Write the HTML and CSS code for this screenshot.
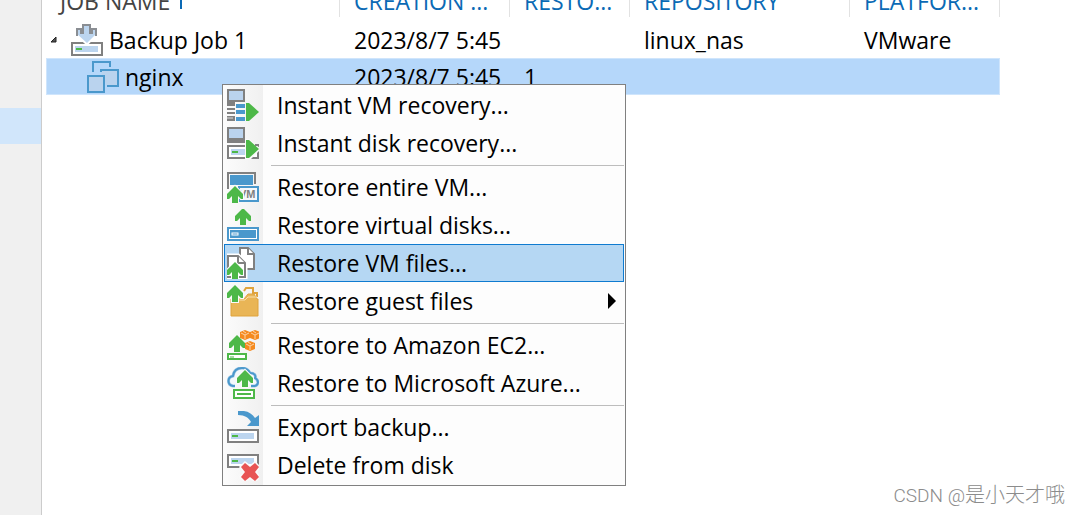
FILE: index.html
```html
<!DOCTYPE html>
<html lang="en">
  <head>
    <meta charset="UTF-8" />
    <meta name="viewport" content="width=device-width, initial-scale=1.0" />
    <title>Backups</title>
    <link rel="stylesheet" href="styles.css">
  </head>

  <body>
    <!-- shared icon parts -->
    <svg class="defs" width="0" height="0">
      <defs>
        <path id="arrow-up" d="M8 0 L16 8 V13 H14 L11 10 V17 H5 V10 L2 13 H0 V8 Z" />
        <g id="disk">
          <rect x="1" y="1" width="30" height="12" fill="#fff" stroke="#808080" stroke-width="2" />
          <rect x="4" y="4" width="23" height="6" fill="#bcd5ef" />
          <rect x="5" y="6" width="6" height="2" fill="#4db848" />
        </g>
        <g id="monitor">
          <rect x="1" y="1" width="16" height="11" fill="#bad3ee" stroke="#808080" stroke-width="2" />
        </g>
        <g id="cube">
          <path d="M5 0 L10 2 V8 L5 10 L0 8 V2 Z" fill="#f58a1f" />
          <path d="M1 3 L5 5 L9 3 M5 5 V9 M3 1 L6 3" fill="none" stroke="#fbd3a8" />
        </g>
      </defs>
    </svg>

    <aside class="sidebar">
      <div class="sidebar-item selected"></div>
    </aside>

    <main class="content">
      <table class="jobs">
        <colgroup>
          <col class="col-name">
          <col class="col-time">
          <col class="col-points">
          <col class="col-repo">
          <col class="col-platform">
        </colgroup>
        <thead>
          <tr>
            <th class="sorted">JOB NAME
              <svg class="sort" width="10" height="18" viewBox="0 0 10 18">
                <path d="M5 1 V17 M1 5 L5 1 L9 5" fill="none" stroke="#0b6ab5" stroke-width="2" />
              </svg>
            </th>
            <th>CREATION ...</th>
            <th>RESTO...</th>
            <th>REPOSITORY</th>
            <th>PLATFOR...</th>
          </tr>
        </thead>
        <tbody>
          <tr>
            <td>
              <div class="name">
                <svg class="expander" width="7" height="7" viewBox="0 0 7 7">
                  <path d="M6 1 V6 H1 Z" fill="#555" stroke="#222" />
                </svg>
                <svg class="icon" width="32" height="32" viewBox="0 0 32 32">
                  <use href="#disk" y="18" />
                  <path d="M12 1 H19 V9 H21 V5 H25 V10 L16 19 L6 10 V5 H10 V9 H12 Z" fill="#bcd5ef" stroke="#fff" stroke-width="4" />
                  <path d="M12 1 H19 V9 H21 V5 H25 V10 L16 19 L6 10 V5 H10 V9 H12 Z" fill="#bcd5ef" />
                  <path d="M6 12 V5 H10 V9 H12 V1 H19 V9 H21 V5 H25 V12" fill="none" stroke="#8a8e93" stroke-width="2" />
                </svg>
                <span>Backup Job 1</span>
              </div>
            </td>
            <td>2023/8/7 5:45</td>
            <td></td>
            <td>linux_nas</td>
            <td>VMware</td>
          </tr>
          <tr class="selected">
            <td>
              <div class="name child">
                <svg class="icon" width="32" height="32" viewBox="0 0 32 32">
                  <g fill="#bad3ee" stroke="#4a98cc" stroke-width="2">
                    <path d="M6 11 V1 H23 V6" fill="none" />
                    <path d="M14 11 V9 H31 V25 H20" />
                    <rect x="1" y="15" width="16" height="16" />
                  </g>
                </svg>
                <span>nginx</span>
              </div>
            </td>
            <td>2023/8/7 5:45</td>
            <td>1</td>
            <td></td>
            <td></td>
          </tr>
        </tbody>
      </table>
    </main>

    <div class="menu" role="menu">
      <button class="menu-item" role="menuitem">
        <svg class="icon" width="32" height="32" viewBox="0 0 32 32">
          <use href="#monitor" />
          <path d="M0 13 H8 V17 H0 Z M0 19 H8 V21 H0 Z M0 23 H8 V25 H0 Z M0 27 H8 V32 H0 Z" fill="#808080" />
          <path d="M0 29 H6" stroke="#ddd" />
          <path d="M9 15 H18 V19 H9 Z M9 21 H18 V25 H9 Z M9 28 H18 V32 H9 Z" fill="#4a98cc" />
          <path d="M19 14 H22 L32 23 L22 32 H19 Z" fill="#4db848" />
        </svg>
        <span>Instant VM recovery...</span>
      </button>
      <button class="menu-item" role="menuitem">
        <svg class="icon" width="32" height="32" viewBox="0 0 32 32">
          <use href="#monitor" />
          <path d="M0 13 H18 V16 H0 Z" fill="#808080" />
          <use href="#disk" y="18" />
          <path d="M18 12 H22 L34 22 L23 33 H18 Z" fill="#fafafa" />
          <path d="M19 13 H22 L32 22 L22 31 H19 Z" fill="#4db848" />
          <path d="M28 31 H31 V27 M28 18 H31 V19" fill="none" stroke="#808080" stroke-width="2" />
        </svg>
        <span>Instant disk recovery...</span>
      </button>
      <hr class="separator">
      <button class="menu-item" role="menuitem">
        <svg class="icon" width="32" height="32" viewBox="0 0 32 32">
          <path d="M1 18 V2 H28 V13" fill="none" stroke="#808080" stroke-width="2" />
          <rect x="3" y="4" width="23" height="10" fill="#4a98cc" />
          <rect x="12" y="16" width="19" height="14" fill="#f5f8fb" stroke="#4a98cc" stroke-width="2" />
          <text class="vm" x="12" y="27">VM</text>
          <use href="#arrow-up" y="15" fill="#4db848" stroke="#fafafa" stroke-width="2" />
          <use href="#arrow-up" y="15" fill="#4db848" />
        </svg>
        <span>Restore entire VM...</span>
      </button>
      <button class="menu-item" role="menuitem">
        <svg class="icon" width="32" height="32" viewBox="0 0 32 32">
          <use href="#arrow-up" x="8" y="-1" fill="#4db848" />
          <rect x="1" y="19" width="30" height="12" fill="#fff" stroke="#4a98cc" stroke-width="2" />
          <rect x="3" y="21" width="26" height="8" fill="#4a98cc" />
          <rect x="5" y="24" width="6" height="2" fill="none" stroke="#fff" />
        </svg>
        <span>Restore virtual disks...</span>
      </button>
      <button class="menu-item active" role="menuitem">
        <svg class="icon" width="32" height="32" viewBox="0 0 32 32">
          <g fill="#fff" stroke="#808080" stroke-width="2">
            <path d="M13 1 H21 L27 7 V22 H13 Z" />
            <path d="M21 1 V7 H27" />
            <path d="M1 9 H11 L18 16 V30 H1 Z" stroke="#fff" stroke-width="5" />
            <path d="M1 9 H11 L18 16 V30 H1 Z" />
            <path d="M11 9 V16 H18" />
          </g>
          <use href="#arrow-up" y="15" stroke="#fff" stroke-width="2" />
          <use href="#arrow-up" y="15" fill="#4db848" />
        </svg>
        <span>Restore VM files...</span>
      </button>
      <button class="menu-item" role="menuitem" aria-haspopup="true">
        <svg class="icon" width="32" height="32" viewBox="0 0 32 32">
          <path d="M17 6 L19 3 H26 V8 H30 V12" fill="none" stroke="#dfa33c" stroke-width="2" />
          <path d="M4 14 H17 L21 9 H27 L30 14 H31 V31 H4 Z" fill="#e9b556" stroke="#dfa33c" />
          <path d="M5 15 H18 L21 12 H30" fill="none" stroke="#f7dfae" />
          <use href="#arrow-up" fill="#4db848" stroke="#fafafa" stroke-width="2" />
          <use href="#arrow-up" fill="#4db848" />
        </svg>
        <span>Restore guest files</span>
        <svg class="submenu" width="8" height="16" viewBox="0 0 8 16">
          <path d="M0 0 L8 8 L0 16 Z" />
        </svg>
      </button>
      <hr class="separator">
      <button class="menu-item" role="menuitem">
        <svg class="icon" width="32" height="32" viewBox="0 0 32 32">
          <use href="#arrow-up" x="2" y="6" fill="#4db848" />
          <rect x="1" y="25" width="18" height="5" fill="#fff" stroke="#4db848" stroke-width="2" />
          <path d="M3 28 H7" stroke="#4db848" />
          <use href="#cube" x="13" y="1" />
          <use href="#cube" x="23" y="1" />
          <use href="#cube" x="18" y="12" />
        </svg>
        <span>Restore to Amazon EC2...</span>
      </button>
      <button class="menu-item" role="menuitem">
        <svg class="icon" width="32" height="32" viewBox="0 0 32 32">
          <path d="M8 19 H6 C0 18 0 10 6 9 C7 2 12 1 15 1 C20 1 22 4 23 6 C28 6 29 9 28 11 C33 14 31 19 27 19 H24" fill="#f3f8fc" stroke="#a5cbe6" stroke-width="3" />
          <path d="M8 19 H6 C0 18 0 10 6 9 C7 2 12 1 15 1 C20 1 22 4 23 6 C28 6 29 9 28 11 C33 14 31 19 27 19 H24" fill="none" stroke="#4a98cc" stroke-width="2" />
          <use href="#arrow-up" x="10" y="3" fill="#4db848" stroke="#fafafa" stroke-width="2" />
          <use href="#arrow-up" x="10" y="3" fill="#4db848" />
          <rect x="7" y="23" width="20" height="8" fill="#fff" stroke="#4db848" stroke-width="2" />
          <path d="M10 27 H24" stroke="#4db848" stroke-width="2" />
        </svg>
        <span>Restore to Microsoft Azure...</span>
      </button>
      <hr class="separator">
      <button class="menu-item" role="menuitem">
        <svg class="icon" width="32" height="32" viewBox="0 0 32 32">
          <path d="M11 0 C19 -1 25 2 28 7 L32 4 V15 H20 L24 11 C22 7 18 4 11 4 Z" fill="#4a98cc" />
          <use href="#disk" y="18" />
        </svg>
        <span>Export backup...</span>
      </button>
      <button class="menu-item" role="menuitem">
        <svg class="icon" width="32" height="32" viewBox="0 0 32 32">
          <use href="#disk" y="5" />
          <path d="M18 14 L23 18 L28 14 L32 18 L28 23 L32 28 L28 32 L23 28 L18 32 L14 28 L18 23 L14 18 Z" fill="#e85454" stroke="#fafafa" stroke-width="3" />
          <path d="M18 14 L23 18 L28 14 L32 18 L28 23 L32 28 L28 32 L23 28 L18 32 L14 28 L18 23 L14 18 Z" fill="#e85454" />
        </svg>
        <span>Delete from disk</span>
      </button>
    </div>

    <div class="watermark"><span>CSDN @</span>是小天才哦</div>
  </body>
</html>
```
FILE: styles.css
```css
* {
  margin: 0;
  padding: 0;
  box-sizing: border-box;
}

body {
  position: relative;
  display: flex;
  height: 100vh;
  overflow: hidden;
  background-color: #fff;
  color: #000;
  font-family: "Open Sans", "Noto Sans", sans-serif;
  font-size: 23px;
  line-height: 36px;
}

svg {
  display: block;
  flex: none;
}

.defs {
  position: absolute;
}

.sidebar {
  flex: 0 0 42px;
  padding-top: 108px;
  background-color: #f0f0f0;
  border-right: 1px solid #ccc;
}

.sidebar-item {
  height: 36px;
}

.sidebar-item.selected {
  background-color: #d1e6fb;
}

.content {
  flex: 1;
  padding-left: 4px;
  overflow: hidden;
}

/* the list is scrolled, so the header is partly out of view */
.jobs {
  width: 954px;
  margin-top: -16px;
  table-layout: fixed;
  border-collapse: separate;
  border-spacing: 0;
}

.col-name {
  width: 294px;
}

.col-time {
  width: 170px;
}

.col-points {
  width: 120px;
}

.col-repo {
  width: 220px;
}

.col-platform {
  width: 150px;
}

.jobs th {
  height: 33px;
  padding-left: 14px;
  color: #0b6ab5;
  font-weight: 400;
  line-height: 32px;
  text-align: left;
  white-space: nowrap;
  border-right: 1px solid #e2e2e2;
}

.jobs th.sorted {
  color: #444;
}

.sort {
  display: inline-block;
}

.jobs tbody::before {
  content: "";
  display: block;
  height: 4px;
}

.jobs td {
  height: 37px;
  padding-left: 14px;
  white-space: nowrap;
}

.jobs td:first-child {
  padding-left: 4px;
}

.jobs tr.selected {
  background-color: #b5d7fa;
  box-shadow: inset 0 0 0 1px #cfe5fc;
}

.name {
  display: flex;
  align-items: center;
}

.name .icon {
  margin-right: 6px;
}

.expander {
  margin-right: 14px;
}

.name.child {
  padding-left: 37px;
}

.menu {
  position: absolute;
  left: 222px;
  top: 84px;
  width: 404px;
  padding: 1px;
  background: linear-gradient(to right, #fcfcfc, #f0f0f0 40px, #fdfdfd 40px);
  border: 1px solid #808080;
}

.menu-item {
  display: flex;
  align-items: center;
  gap: 18px;
  width: 100%;
  height: 38px;
  padding: 0 7px 0 2px;
  background: none;
  border: 1px solid transparent;
  color: inherit;
  font: inherit;
  text-align: left;
}

.menu-item.active {
  background-color: #b5d7f3;
  border-color: #0f7bd0;
}

.submenu {
  margin-left: auto;
}

.separator {
  height: 1px;
  margin: 3px 0 2px 47px;
  border: 0;
  background-color: #bdbdbd;
}

.vm {
  fill: #808080;
  font: bold 11px "Liberation Sans", sans-serif;
}

.watermark {
  position: absolute;
  right: 15px;
  bottom: 5px;
  color: #8c8c8c;
  font-family: "Noto Sans CJK SC", sans-serif;
  font-size: 20px;
  font-weight: 300;
  line-height: 28px;
}

.watermark span {
  font-family: Roboto, sans-serif;
  font-size: 19px;
}
```
